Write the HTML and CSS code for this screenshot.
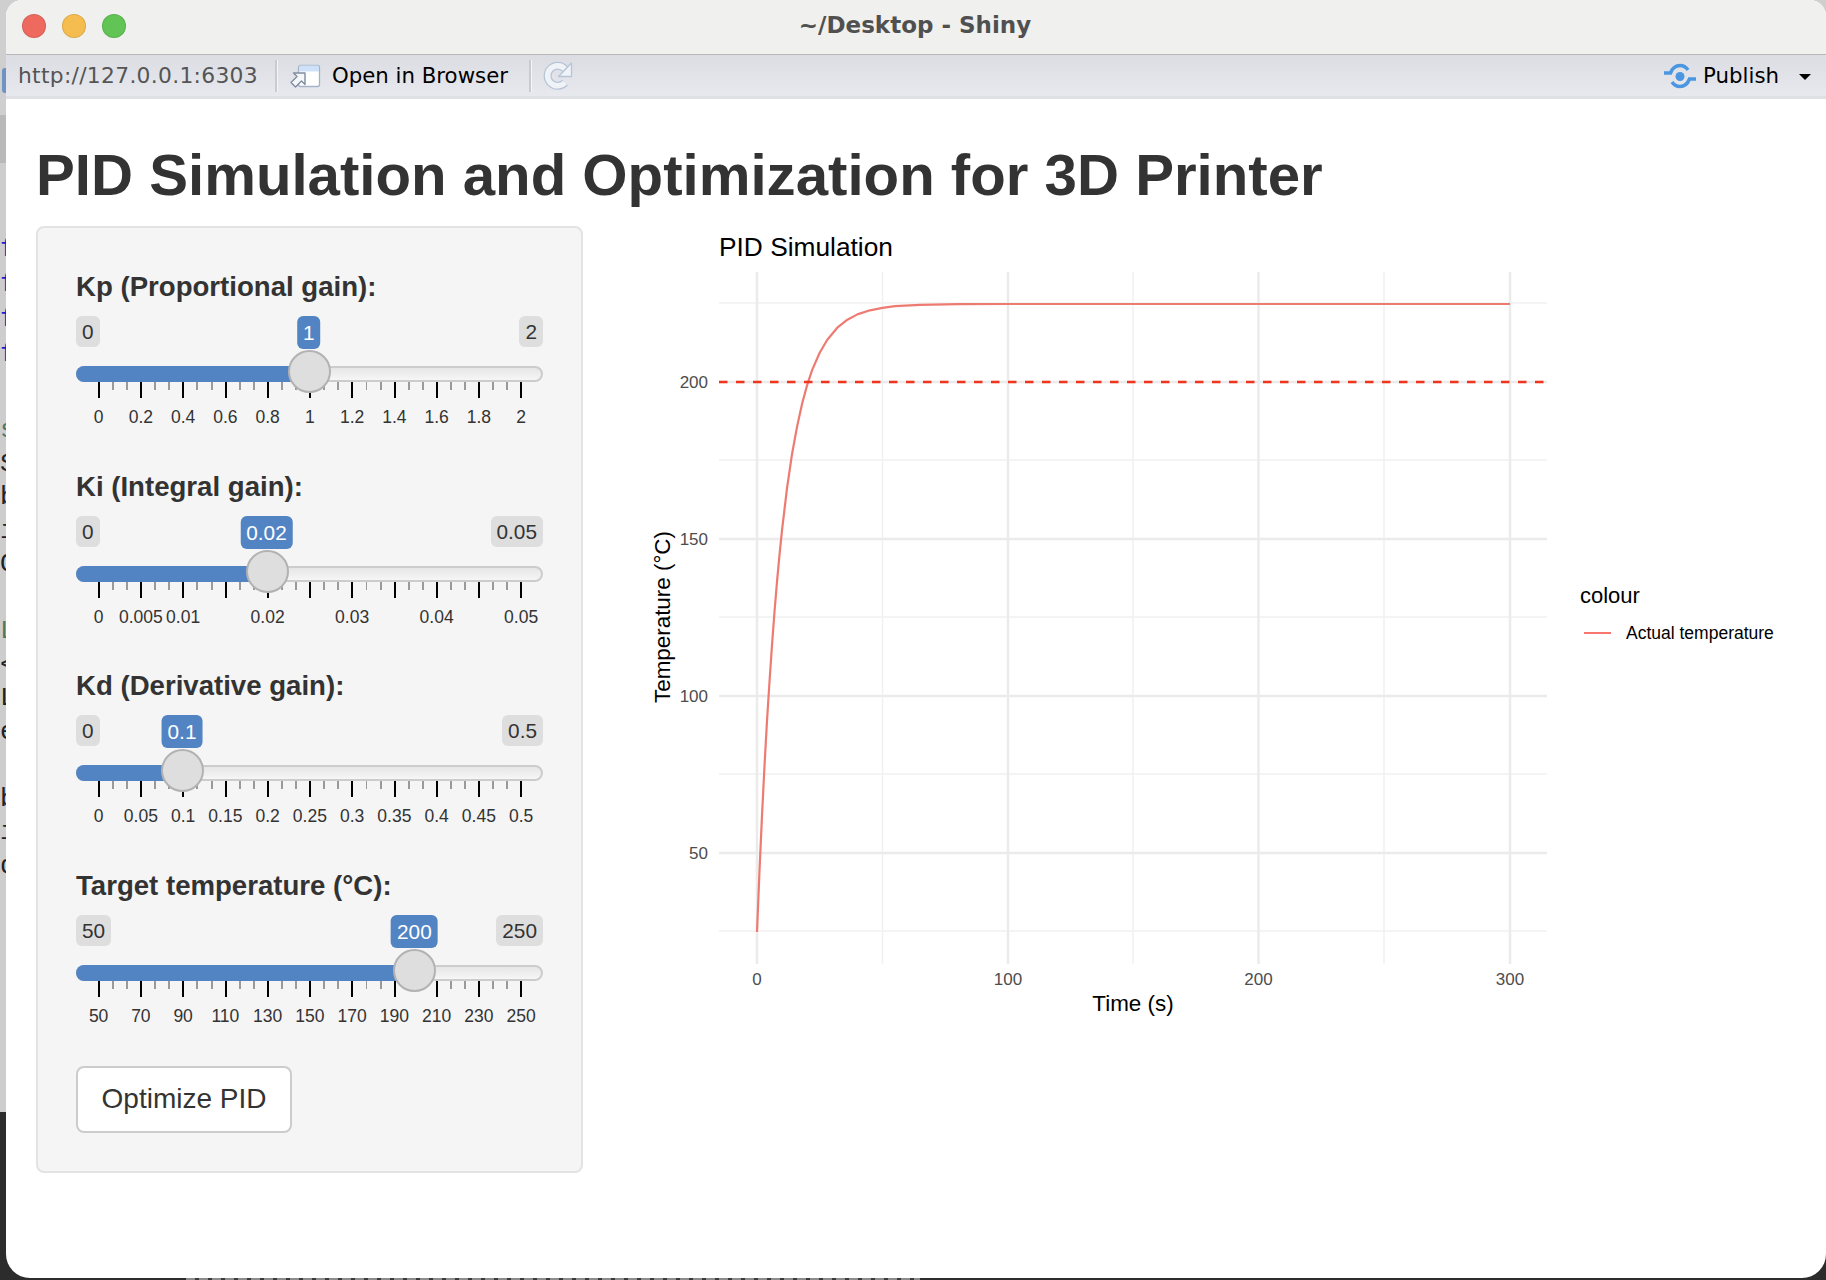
FILE: index.html
```html
<!DOCTYPE html>
<html>
<head>
    <meta charset="UTF-8"/>
    <title>~/Desktop - Shiny</title>
    <link rel="stylesheet" href="styles.css">
</head>

<body>
<!-- editor window peeking out behind the viewer -->
<div class="behind">
    <span class="tab"></span>
    <pre class="code parens">f
f
f
f</pre>
    <pre class="code"><i>s</i>
S
b
i
O

<i>L</i>
&lt;
L
e

b
i
d</pre>
</div>

<div class="window">
    <div class="titlebar">
        <span class="dot red"></span>
        <span class="dot yellow"></span>
        <span class="dot green"></span>
        <span class="title">~/Desktop - Shiny</span>
    </div>

    <div class="toolbar">
        <span class="url">http://127.0.0.1:6303</span>
        <span class="sep sep-first"></span>
        <svg class="open-icon" width="32" height="24" viewBox="0 0 32 24">
            <rect x="9.500" y="1.500" width="21" height="21" rx="2" fill="#fff" stroke="#a3b3c9" stroke-width="1.300"/>
            <path d="M10 3.500a2 2 0 0 1 2-2h16a2 2 0 0 1 2 2V7.500H10z" fill="#cfe1f9"/>
            <path d="M2 18.500l6-6-3.500-3.500H16v11.500l-3.500-3.500-6 6z" fill="#f4f6f9" stroke="#7f8da0" stroke-width="1.400" stroke-linejoin="round"/>
        </svg>
        <span class="tool-text">Open in Browser</span>
        <span class="sep"></span>
        <svg class="refresh-icon" width="30" height="30" viewBox="0 0 30 30">
            <path d="M22 21.500a10 10 0 1 1 0-13.500" fill="none" stroke="#b7c4d6" stroke-width="8"/>
            <path d="M22 21.500a10 10 0 1 1 0-13.500" fill="none" stroke="#eff3f8" stroke-width="5.500"/>
            <path d="M28.500 2v13.500h-13z" fill="#eff3f8" stroke="#b7c4d6" stroke-width="1.300" stroke-linejoin="round"/>
        </svg>
        <span class="spacer"></span>
        <svg class="publish-icon" width="32" height="26" viewBox="0 0 32 26">
            <circle cx="16" cy="13.500" r="4.500" fill="#4a96e0"/>
            <path d="M0 10h6.500C8.500 5 12 2.500 16 2.500c3.500 0 6 1.500 8 4.500" fill="none" stroke="#4a96e0" stroke-width="3.500"/>
            <path d="M32 16h-6.500C23.500 21 20 23.500 16 23.500c-3.500 0-6-1.500-8-4.500" fill="none" stroke="#4a96e0" stroke-width="3.500"/>
        </svg>
        <span class="tool-text">Publish</span>
        <span class="caret"></span>
    </div>

    <div class="page">
        <h1>PID Simulation and Optimization for 3D Printer</h1>

        <div class="row">
            <div class="well">

                <div class="field">
                    <label>Kp (Proportional gain):</label>
                    <div class="bubbles">
                        <span class="bubble">0</span>
                        <span class="bubble">2</span>
                        <span class="bubble current" style="--pos: 0.5">1</span>
                    </div>
                    <div class="track" style="--pos: 0.5"><span class="fill"></span><span class="handle"></span></div>
                    <div class="ticks"></div>
                    <div class="tick-labels">
                        <span>0</span><span>0.2</span><span>0.4</span><span>0.6</span><span>0.8</span><span>1</span><span>1.2</span><span>1.4</span><span>1.6</span><span>1.8</span><span>2</span>
                    </div>
                </div>

                <div class="field">
                    <label>Ki (Integral gain):</label>
                    <div class="bubbles">
                        <span class="bubble">0</span>
                        <span class="bubble">0.05</span>
                        <span class="bubble current" style="--pos: 0.4">0.02</span>
                    </div>
                    <div class="track" style="--pos: 0.4"><span class="fill"></span><span class="handle"></span></div>
                    <div class="ticks"></div>
                    <div class="tick-labels">
                        <span>0</span><span>0.005</span><span>0.01</span><span></span><span>0.02</span><span></span><span>0.03</span><span></span><span>0.04</span><span></span><span>0.05</span>
                    </div>
                </div>

                <div class="field">
                    <label>Kd (Derivative gain):</label>
                    <div class="bubbles">
                        <span class="bubble">0</span>
                        <span class="bubble">0.5</span>
                        <span class="bubble current" style="--pos: 0.2">0.1</span>
                    </div>
                    <div class="track" style="--pos: 0.2"><span class="fill"></span><span class="handle"></span></div>
                    <div class="ticks"></div>
                    <div class="tick-labels">
                        <span>0</span><span>0.05</span><span>0.1</span><span>0.15</span><span>0.2</span><span>0.25</span><span>0.3</span><span>0.35</span><span>0.4</span><span>0.45</span><span>0.5</span>
                    </div>
                </div>

                <div class="field">
                    <label>Target temperature (°C):</label>
                    <div class="bubbles">
                        <span class="bubble">50</span>
                        <span class="bubble">250</span>
                        <span class="bubble current" style="--pos: 0.75">200</span>
                    </div>
                    <div class="track" style="--pos: 0.75"><span class="fill"></span><span class="handle"></span></div>
                    <div class="ticks"></div>
                    <div class="tick-labels">
                        <span>50</span><span>70</span><span>90</span><span>110</span><span>130</span><span>150</span><span>170</span><span>190</span><span>210</span><span>230</span><span>250</span>
                    </div>
                </div>

                <button class="btn" type="button">Optimize PID</button>
            </div>

            <!-- viewBox uses page coordinates, easier to compare against the screenshot -->
            <svg class="plot" width="1156" height="800" viewBox="640 226 1156 800">
                <g class="grid-minor">
                    <line x1="719" x2="1547" y1="303" y2="303"/>
                    <line x1="719" x2="1547" y1="460" y2="460"/>
                    <line x1="719" x2="1547" y1="617" y2="617"/>
                    <line x1="719" x2="1547" y1="774" y2="774"/>
                    <line x1="719" x2="1547" y1="931" y2="931"/>
                    <line x1="882.500" x2="882.500" y1="272" y2="964"/>
                    <line x1="1133" x2="1133" y1="272" y2="964"/>
                    <line x1="1384" x2="1384" y1="272" y2="964"/>
                </g>
                <g class="grid-major">
                    <line x1="719" x2="1547" y1="382" y2="382"/>
                    <line x1="719" x2="1547" y1="539" y2="539"/>
                    <line x1="719" x2="1547" y1="696" y2="696"/>
                    <line x1="719" x2="1547" y1="853" y2="853"/>
                    <line x1="757" x2="757" y1="272" y2="964"/>
                    <line x1="1008" x2="1008" y1="272" y2="964"/>
                    <line x1="1258.500" x2="1258.500" y1="272" y2="964"/>
                    <line x1="1510" x2="1510" y1="272" y2="964"/>
                </g>

                <polyline class="curve" points="757,932 759.500,870.800 762,815.600 764.500,765.800 767,720.900 769.600,680.300 772.100,643.600 774.600,610.500 777.100,580.700 779.600,553.800 782.100,529.400 787.100,487.700 792.100,453.700 797.200,425.900 802.200,403.300 807.200,384.900 812.200,369.900 819.800,352.500 827.300,339.700 837.300,327.700 847.400,319.700 857.400,314.400 870,310.300 882.500,307.800 895,306.200 920,304.800 958,304.200 1008,304 1510,304"/>
                <line class="target" x1="719" x2="1547" y1="382" y2="382"/>

                <text class="plot-title" x="719" y="256">PID Simulation</text>

                <g class="tick-y">
                    <text x="708" y="388">200</text>
                    <text x="708" y="545">150</text>
                    <text x="708" y="702">100</text>
                    <text x="708" y="859">50</text>
                </g>
                <g class="tick-x">
                    <text x="757" y="985">0</text>
                    <text x="1008" y="985">100</text>
                    <text x="1258.500" y="985">200</text>
                    <text x="1510" y="985">300</text>
                </g>

                <text class="axis-title" x="1133" y="1011">Time (s)</text>
                <text class="axis-title" transform="translate(670 617) rotate(-90)">Temperature (°C)</text>

                <text class="legend-title" x="1580" y="603">colour</text>
                <line class="legend-key" x1="1584" x2="1611" y1="633" y2="633"/>
                <text class="legend-label" x="1626" y="639">Actual temperature</text>
            </svg>
        </div>
    </div>
</div>

<div class="dock-text"></div>
</body>
</html>
```

FILE: styles.css
```css
html, body {
margin: 0;
padding: 0;
}

body {
width: 1826px;
height: 1280px;
overflow: hidden;
position: relative;
font-family: "Liberation Sans", Arial, sans-serif;
color: #333;
background: linear-gradient(#cfcfcf 0, #cfcfcf 115px, #b9b9b9 115px, #b9b9b9 163px, #cdcdcd 163px, #cdcdcd 1112px, #2c2c2c 1112px);
}

/* stuff behind the window */
.behind {
position: absolute;
left: 0;
top: 0;
width: 6px;
height: 1280px;
overflow: hidden;
}

.tab {
display: block;
position: absolute;
left: 2px;
top: 68px;
width: 4px;
height: 25px;
background: #6f93c4;
border-radius: 3px 0 0 3px;
}

.code {
margin: 42px 0 0;
font-family: "Liberation Mono", monospace;
font-size: 26px;
line-height: 33.500px;
color: #222;
}

.code.parens {
margin: 232px 0 0;
line-height: 35px;
color: #1a1ad0;
}

.code i {
font-style: normal;
color: #4d7a5f;
}

.dock-text {
position: absolute;
left: 186px;
bottom: 0;
width: 734px;
height: 2px;
background: repeating-linear-gradient(90deg, #8c8c8c 0, #8c8c8c 9px, #3a3a3a 9px, #3a3a3a 13px);
}

.window {
position: relative;
margin-left: 6px;
width: 1820px;
height: 1278px;
background: #fff;
border-radius: 16px 16px 24px 24px;
overflow: hidden;
display: flex;
flex-direction: column;
}

.titlebar {
position: relative;
height: 55px;
box-sizing: border-box;
flex: none;
display: flex;
align-items: center;
gap: 16px;
padding: 0 0 3px 16px;
background: #f0f0ee;
border-bottom: 1px solid #b9b9b9;
}

.dot {
width: 24px;
height: 24px;
border-radius: 50%;
box-sizing: border-box;
border: 1px solid rgba(0, 0, 0, 0.1);
}

.red { background: #ee6a5f; }
.yellow { background: #f5bd4f; }
.green { background: #61c454; }

.title {
position: absolute;
left: 0;
right: 0;
top: 11px;
padding-right: 2px;
text-align: center;
font-family: "DejaVu Sans", sans-serif;
font-weight: bold;
font-size: 23px;
line-height: 28px;
color: #505050;
}

.toolbar {
height: 44px;
box-sizing: border-box;
flex: none;
display: flex;
align-items: center;
padding-left: 12px;
background: linear-gradient(#dcdde3, #e8e9ee);
border-bottom: 3px solid #dfe0e3;
font-family: "DejaVu Sans", sans-serif;
font-size: 21.300px;
}

.url {
color: #555;
font-size: 21.800px;
letter-spacing: 0.300px;
}

.sep {
width: 2px;
height: 32px;
background: #cacbcf;
border-right: 1px solid #f5f5f7;
margin-left: 21px;
}

.sep-first {
margin-left: 17px;
}

.tool-text {
color: #000;
}

.open-icon {
margin: 0 11px 0 11px;
}

.refresh-icon {
margin-left: 11px;
}

.spacer {
flex: 1;
}

.publish-icon {
margin-right: 7px;
}

.caret {
width: 0;
height: 0;
border-left: 6px solid transparent;
border-right: 6px solid transparent;
border-top: 6px solid #000;
margin: 3px 15px 0 20px;
}

.page {
padding: 0 30px;
flex: 1;
}

h1 {
margin: 0;
height: 127px;
box-sizing: border-box;
padding-top: 44px;
font-size: 58.200px;
line-height: 64px;
font-weight: bold;
color: #333;
white-space: nowrap;
}

.row {
display: flex;
gap: 57px;
align-items: flex-start;
}

.well {
flex: none;
width: 547px;
box-sizing: border-box;
padding: 39px 38px 38px 38px;
background: #f5f5f5;
border: 2px solid #e3e3e3;
border-radius: 8px;
}

.field {
height: 199.700px;
}

.field label {
display: block;
font-size: 27.600px;
line-height: 40px;
font-weight: bold;
white-space: nowrap;
}

.bubbles {
position: relative;
display: flex;
justify-content: space-between;
align-items: flex-start;
height: 33px;
margin-top: 9px;
}

.bubble {
padding: 2px 6px;
font-size: 20.800px;
line-height: 27px;
background: #dedede;
border-radius: 6px;
}

.bubble.current {
position: absolute;
top: 0;
left: calc(21.500px + var(--pos) * 422.500px);
transform: translateX(-50%);
padding: 3px 6px;
background: #5284c4;
color: #fff;
}

.track {
position: relative;
height: 16px;
box-sizing: border-box;
margin-top: 17px;
background: linear-gradient(#e6e6e6, #f6f6f6);
border: 2px solid #ccc;
border-radius: 8px;
}

.fill {
position: absolute;
left: -2px;
top: -2px;
height: 16px;
width: calc(20.500px + var(--pos) * 422.500px);
background: #5284c4;
border-radius: 8px 0 0 8px;
}

.handle {
position: absolute;
top: -18px;
left: calc(-1.500px + var(--pos) * 422.500px);
width: 43px;
height: 43px;
box-sizing: border-box;
background: #dedede;
border: 2px solid #b2b2b2;
border-radius: 50%;
}

.ticks {
width: 424px;
height: 16px;
margin-left: 22px;
background-repeat: no-repeat;
background-image:
  repeating-linear-gradient(90deg, #000 0, #000 2px, transparent 2px, transparent 42.250px),
  repeating-linear-gradient(90deg, transparent 0, transparent 14px, #9a9a9a 14px, #9a9a9a 16px, transparent 16px, transparent 28.200px, #9a9a9a 28.200px, #9a9a9a 30.200px, transparent 30.200px, transparent 42.250px);
background-size: 100% 16px, 100% 8px;
}

.tick-labels {
display: grid;
grid-template-columns: repeat(11, 42.250px);
margin: 8px 0 0 1.500px;
font-size: 17.500px;
line-height: 22px;
text-align: center;
white-space: nowrap;
}

.tick-labels span {
display: flex;
justify-content: center;
}

.btn {
display: block;
width: 216px;
height: 67px;
box-sizing: border-box;
padding: 0;
font-family: "Liberation Sans", Arial, sans-serif;
font-size: 28px;
color: #333;
background: #fff;
border: 2px solid #ccc;
border-radius: 8px;
}

/* plot */
.plot {
flex: none;
}

.grid-minor line {
stroke: #f1f1f1;
stroke-width: 1.500;
}

.grid-major line {
stroke: #ebebeb;
stroke-width: 2.500;
}

.curve {
fill: none;
stroke: #ee7b72;
stroke-width: 2.200;
stroke-linejoin: round;
}

.target {
stroke: #f0351f;
stroke-width: 2.500;
stroke-dasharray: 8.500 8.500;
}

.plot text {
font-family: "Liberation Sans", Arial, sans-serif;
}

.plot-title {
font-size: 26.300px;
fill: #000;
}

.tick-y text {
font-size: 17px;
fill: #4d4d4d;
text-anchor: end;
}

.tick-x text {
font-size: 17px;
fill: #4d4d4d;
text-anchor: middle;
}

.axis-title {
font-size: 22.400px;
fill: #000;
text-anchor: middle;
}

.legend-title {
font-size: 22px;
fill: #000;
}

.legend-key {
stroke: #f8766d;
stroke-width: 2;
}

.legend-label {
font-size: 17.500px;
fill: #000;
}
```
